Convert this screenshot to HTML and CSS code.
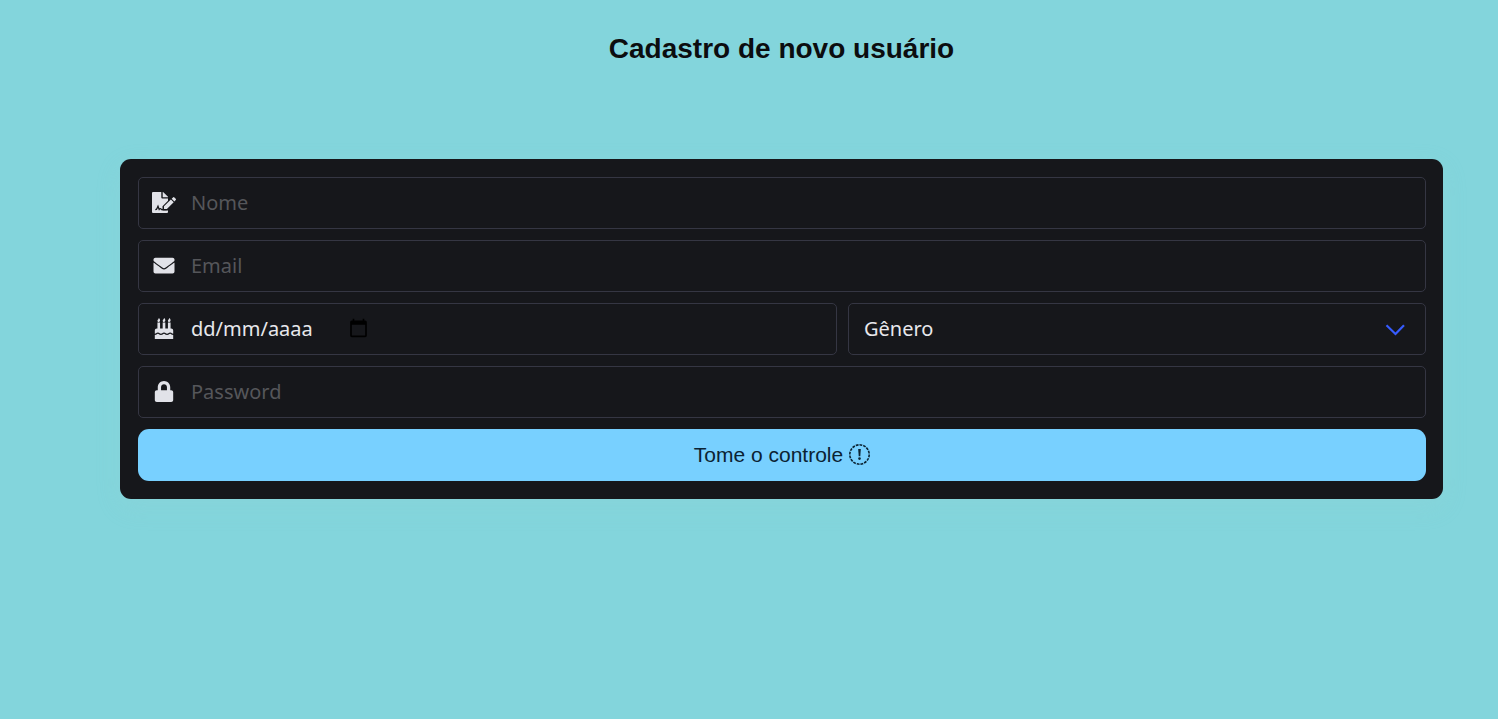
FILE: index.html
```html
<!DOCTYPE html>
<html lang="pt-BR">
<head>
<meta charset="utf-8">
<meta name="viewport" content="width=device-width, initial-scale=1">
<title>Cadastro de novo usuário</title>
<link rel="stylesheet" href="styles.css">
</head>
<body>
<main class="page">
  <h1 class="title">Cadastro de novo usuário</h1>
  <form class="card">
    <label class="field">
      <svg class="icon" viewBox="0 0 24 21" role="img" aria-label="Nome"><path d="M1 0H9.300V5.500q0 1 1 1H16V8.700L10.500 14.200V18.500H16V20q0 1-1 1H1q-1 0-1-1V1q0-1 1-1zM10.700 0h.4L16 4.700v.5H10.700zM12 14.300 18.900 7.500 21.700 10.300 14.900 17.100H12zM19.700 6.700 21 5.400q.700-.6 1.400 0l1.300 1.300q.6.700 0 1.400L22.400 9.400z"/><path class="signature" d="M3.300 17.700q1.300 0 1.700-1.200L6 14.300l1.200 3.100q1.300-1.500 2.400.3h5"/></svg>
      <input class="input" type="text" name="nome" placeholder="Nome">
    </label>
    <label class="field">
      <svg class="icon" viewBox="0 0 512 512" role="img" aria-label="Email"><path d="M502.3 190.8c3.9-3.1 9.7-.2 9.7 4.7V400c0 26.5-21.5 48-48 48H48c-26.5 0-48-21.5-48-48V195.6c0-5 5.7-7.8 9.7-4.7 22.4 17.4 52.1 39.5 154.1 113.6 21.1 15.4 56.7 47.8 92.2 47.6 35.7.3 72-32.8 92.3-47.6 102-74.1 131.6-96.3 154-113.7zM256 320c23.2.4 56.6-29.2 73.4-41.4 132.7-96.3 142.8-104.7 173.4-128.7 5.8-4.5 9.2-11.5 9.2-18.9v-19c0-26.5-21.5-48-48-48H48c-26.5 0-48 21.5-48 48v19c0 7.4 3.4 14.3 9.2 18.9 30.6 23.9 40.7 32.4 173.4 128.7 16.8 12.2 50.2 41.8 73.4 41.4z"/></svg>
      <input class="input" type="email" name="email" placeholder="Email">
    </label>
    <div class="row">
      <div class="field">
        <label class="icon-label" for="nascimento">
          <svg class="icon" viewBox="0 0 448 512" role="img" aria-label="Data de nascimento"><path d="M448 384c-28.02 0-31.26-32-74.5-32-43.43 0-46.825 32-74.75 32-27.695 0-31.454-32-74.75-32-42.842 0-47.218 32-74.5 32-28.148 0-31.202-32-74.75-32-43.547 0-46.653 32-74.75 32v-80c0-26.5 21.5-48 48-48h16V112h64v144h64V112h64v144h64V112h64v144h16c26.5 0 48 21.5 48 48v80zm0 128H0v-96c43.356 0 46.767-32 74.75-32 27.951 0 31.253 32 74.75 32 42.843 0 47.217-32 74.5-32 28.148 0 31.201 32 74.75 32 43.357 0 46.767-32 74.75-32 27.488 0 31.252 32 74.5 32v96zM96 96c-17.75 0-32-14.25-32-32 0-31 32-23 32-64 12 0 32 29.5 32 56s-14.25 40-32 40zm128 0c-17.75 0-32-14.25-32-32 0-31 32-23 32-64 12 0 32 29.5 32 56s-14.25 40-32 40zm128 0c-17.75 0-32-14.25-32-32 0-31 32-23 32-64 12 0 32 29.5 32 56s-14.25 40-32 40z"/></svg>
        </label>
        <input class="input input-date" id="nascimento" type="text" name="nascimento" inputmode="numeric" placeholder="dd/mm/aaaa">
        <button class="calendar" type="button" aria-label="Abrir calendário">
          <svg class="calendar-icon" viewBox="0 0 24 24" aria-hidden="true"><path d="M20 3h-1V1h-2v2H7V1H5v2H4c-1.100 0-2 .9-2 2v16c0 1.100.9 2 2 2h16c1.100 0 2-.9 2-2V5c0-1.100-.9-2-2-2zm0 18H4V8h16v13z"/></svg>
        </button>
      </div>
      <div class="field field-select">
        <select class="select" name="genero" aria-label="Gênero">
          <option>Gênero</option>
          <option>Feminino</option>
          <option>Masculino</option>
        </select>
        <svg class="chevron" viewBox="0 0 20 12" aria-hidden="true"><path d="M1.500 1.200 10.500 10l8.500-8.800"/></svg>
      </div>
    </div>
    <label class="field">
      <svg class="icon" viewBox="0 0 448 512" role="img" aria-label="Password"><path d="M400 224h-24v-72C376 68.200 307.800 0 224 0S72 68.200 72 152v72H48c-26.500 0-48 21.500-48 48v192c0 26.500 21.500 48 48 48h352c26.500 0 48-21.500 48-48V272c0-26.500-21.500-48-48-48zm-104 0H152v-72c0-39.700 32.300-72 72-72s72 32.300 72 72v72z"/></svg>
      <input class="input" type="password" name="password" placeholder="Password">
    </label>
    <button class="submit" type="submit">Tome o controle
      <svg class="alert-icon" viewBox="0 0 21 21" aria-hidden="true"><circle cx="10.500" cy="10.500" r="9.700" pathLength="96"/><path d="M9.200 5h2.600l-.5 7.200H9.700z"/><circle class="dot" cx="10.500" cy="14.600" r="1.300"/></svg>
    </button>
  </form>
</main>
</body>
</html>
```
FILE: styles.css
```css
* {
  box-sizing: border-box;
}

body {
  margin: 0;
  min-height: 100vh;
  background: #83d5dc;
  font-family: "Liberation Sans", Arial, sans-serif;
}

.page {
  padding: 33px 55px 32px 120px;
}

.title {
  margin: 0 0 94px;
  color: #0c0d0f;
  font-size: 28px;
  line-height: 32px;
  text-align: center;
}

.card {
  display: flex;
  flex-direction: column;
  gap: 11px;
  padding: 18px 17px 18px 18px;
  border-radius: 11px;
  background: #16171b;
  box-shadow: 0 8px 24px rgba(150, 210, 210, 0.2);
}

.row {
  display: grid;
  grid-template-columns: 699fr 578fr;
  gap: 11px;
}

.field {
  display: flex;
  align-items: center;
  gap: 15px;
  min-width: 0;
  height: 52px;
  padding: 0 13px;
  border: 1px solid #353643;
  border-radius: 5px;
}

.field:focus-within {
  border-color: #3d5afe;
}

.icon-label {
  display: flex;
}

.icon {
  flex: none;
  width: 24px;
  height: 21px;
  margin-bottom: 1px;
  fill: #e1e2e8;
}

.signature {
  fill: none;
  stroke: #16171b;
  stroke-width: 1.3;
}

.input,
.select {
  min-width: 0;
  border: 0;
  outline: 0;
  background: transparent;
  color: #e8e8ec;
  font-family: "Noto Sans", sans-serif;
  font-size: 20px;
  line-height: 28px;
}

.input {
  flex: 1;
  padding: 0;
}

.input::placeholder {
  color: #55565a;
  opacity: 1;
}

.input-date {
  flex: none;
  width: 142px;
}

.input-date::placeholder {
  color: #e8e8ec;
}

.calendar {
  display: flex;
  padding: 0 0 2px;
  border: 0;
  background: transparent;
}

.calendar-icon {
  width: 21px;
  height: 20px;
  fill: #000;
}

.field-select {
  display: grid;
  padding: 0;
}

.select {
  grid-area: 1 / 1;
  width: 100%;
  height: 50px;
  padding: 0 15px;
  appearance: none;
}

.chevron {
  grid-area: 1 / 1;
  justify-self: end;
  width: 20px;
  height: 12px;
  margin: 2px 20px 0 0;
  fill: none;
  stroke: #365cff;
  stroke-width: 2.2;
  pointer-events: none;
}

.submit {
  display: flex;
  align-items: center;
  justify-content: center;
  gap: 6px;
  height: 52px;
  border: 0;
  border-radius: 11px;
  background: #78d0ff;
  color: #0b2333;
  font-family: inherit;
  font-size: 21px;
}

.alert-icon {
  width: 21px;
  height: 21px;
  margin-bottom: 1px;
  fill: #0b2333;
}

.alert-icon circle {
  fill: none;
  stroke: #0b2333;
  stroke-width: 1.6;
  stroke-dasharray: 4.400 1.600;
}

.alert-icon .dot {
  fill: #0b2333;
  stroke: none;
}
```
